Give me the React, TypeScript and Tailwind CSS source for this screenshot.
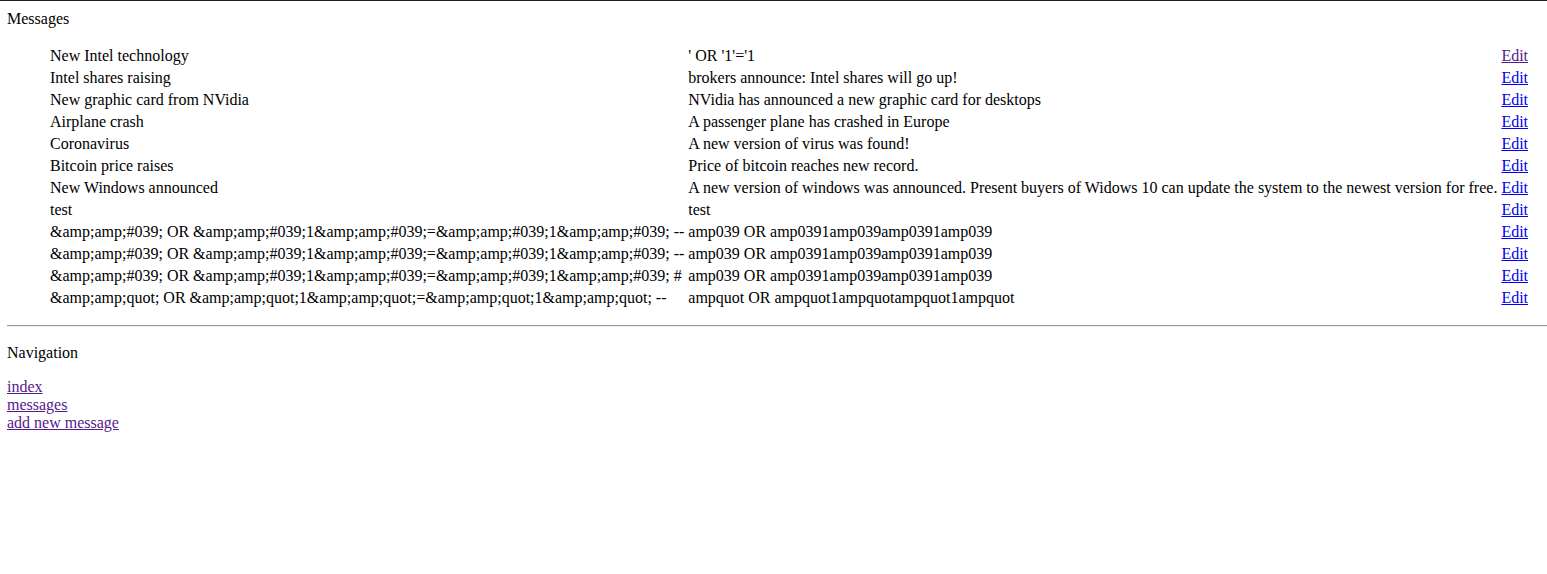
export default function App() {
  const messages = [
    { title: "New Intel technology", body: "' OR '1'='1", visited: true },
    { title: "Intel shares raising", body: "brokers announce: Intel shares will go up!" },
    { title: "New graphic card from NVidia", body: "NVidia has announced a new graphic card for desktops" },
    { title: "Airplane crash", body: "A passenger plane has crashed in Europe" },
    { title: "Coronavirus", body: "A new version of virus was found!" },
    { title: "Bitcoin price raises", body: "Price of bitcoin reaches new record." },
    {
      title: "New Windows announced",
      body: "A new version of windows was announced. Present buyers of Widows 10 can update the system to the newest version for free.",
    },
    { title: "test", body: "test" },
    {
      title: "&amp;amp;#039; OR &amp;amp;#039;1&amp;amp;#039;=&amp;amp;#039;1&amp;amp;#039; --",
      body: "amp039 OR amp0391amp039amp0391amp039",
    },
    {
      title: "&amp;amp;#039; OR &amp;amp;#039;1&amp;amp;#039;=&amp;amp;#039;1&amp;amp;#039; --",
      body: "amp039 OR amp0391amp039amp0391amp039",
    },
    {
      title: "&amp;amp;#039; OR &amp;amp;#039;1&amp;amp;#039;=&amp;amp;#039;1&amp;amp;#039; #",
      body: "amp039 OR amp0391amp039amp0391amp039",
    },
    {
      title: "&amp;amp;quot; OR &amp;amp;quot;1&amp;amp;quot;=&amp;amp;quot;1&amp;amp;quot; --",
      body: "ampquot OR ampquot1ampquotampquot1ampquot",
    },
  ];

  const links = ["index", "messages", "add new message"];

  return (
    <div className="min-h-screen bg-white text-black font-['Liberation_Serif','Times_New_Roman',serif] text-[16px] leading-[18px]">
      <div className="border-t border-[#222]"></div>
      <div className="pl-[7px]">
        <p className="mt-[9px] mb-4">Messages</p>
        <table className="ml-10 border-separate border-spacing-[2px] whitespace-nowrap">
          <tbody>
            {messages.map((m, index) => (
              <tr key={`msg-${index}`}>
                <td className="p-px">{m.title}</td>
                <td className="p-px">{m.body}</td>
                <td className="p-px">
                  <a
                    href="#"
                    className={m.visited ? "underline text-[#551a8b]" : "underline text-[#0000ee]"}
                  >
                    Edit
                  </a>
                </td>
              </tr>
            ))}
          </tbody>
        </table>
        <div className="mt-[15px] mb-[17px] border-t border-b border-t-[#9a9a9a] border-b-[#eeeeee]"></div>
        <p className="mb-4">Navigation</p>
        <div className="flex flex-col items-start">
          {links.map((link) => (
            <a key={link} href="#" className="underline text-[#551a8b]">
              {link}
            </a>
          ))}
        </div>
      </div>
    </div>
  );
}
